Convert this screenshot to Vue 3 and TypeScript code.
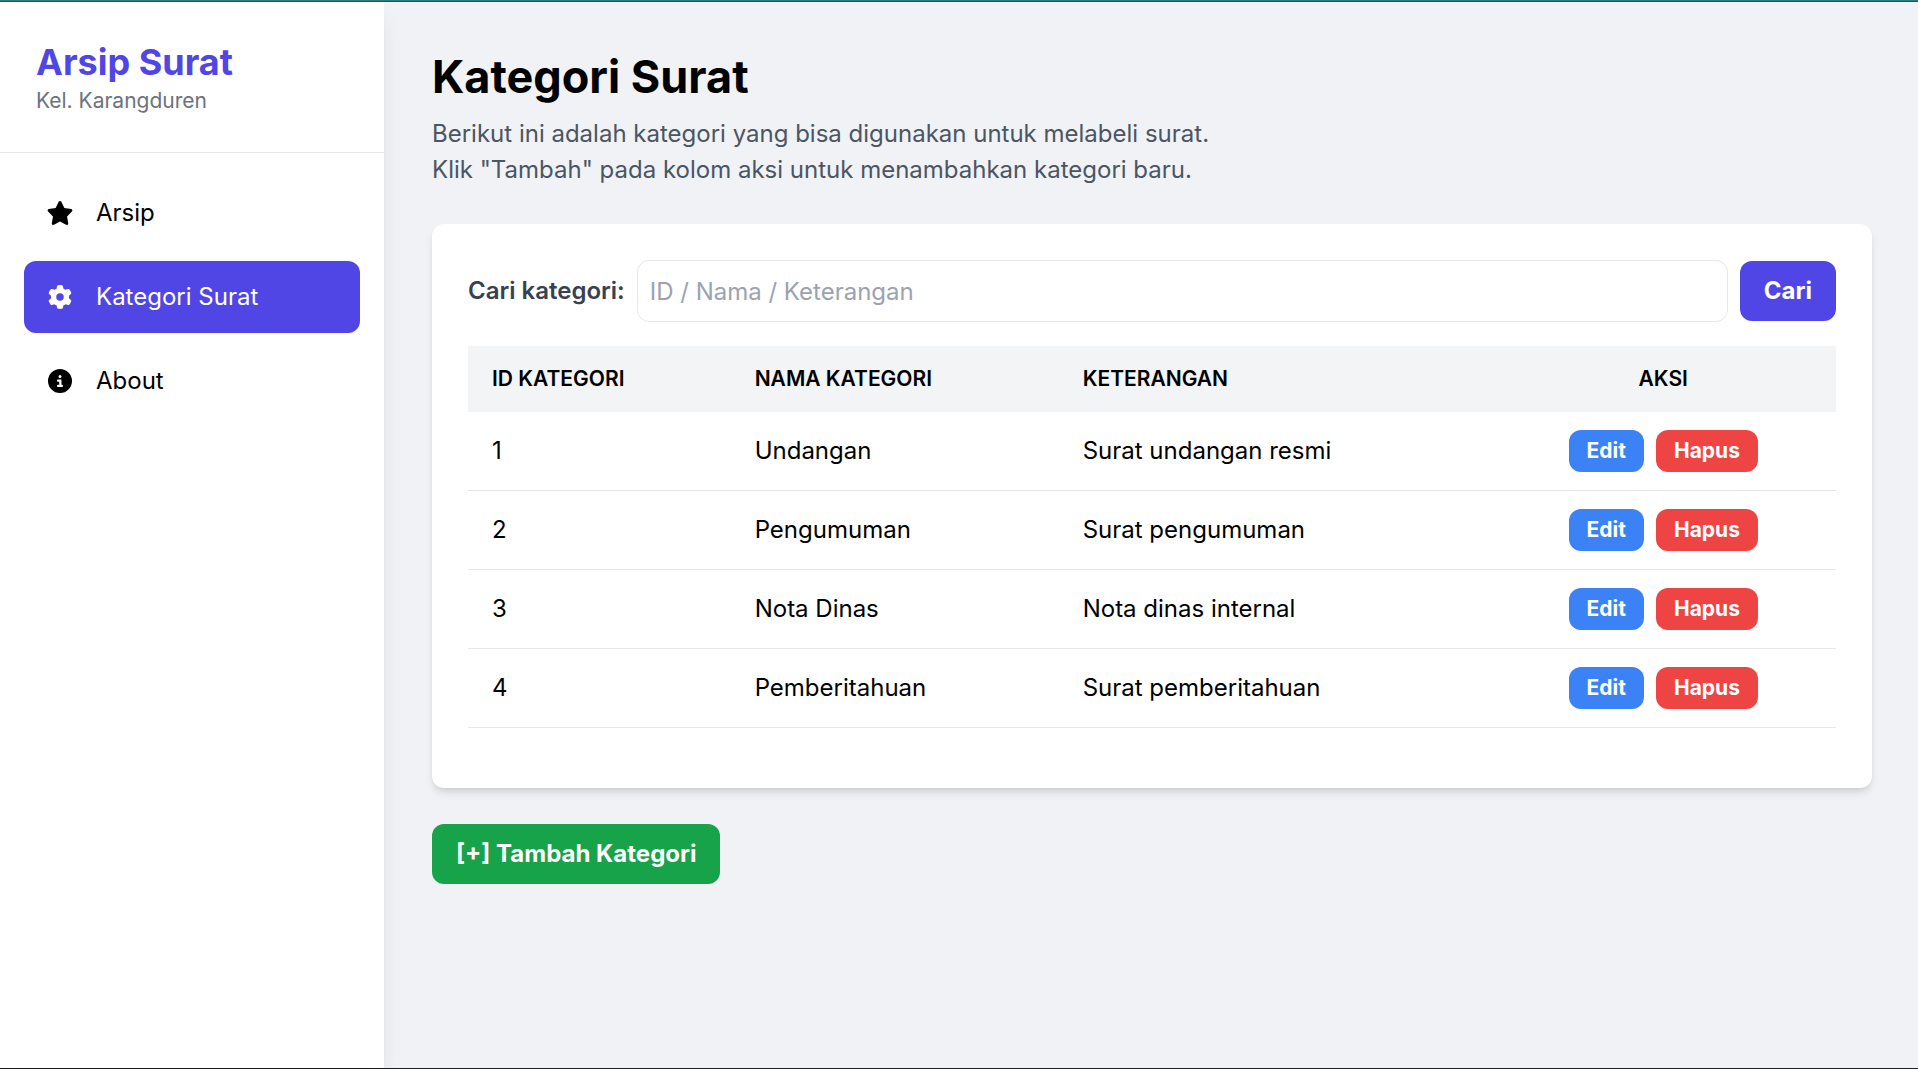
<script setup lang="ts">
import { computed, ref } from 'vue'

interface Kategori {
  id: number
  nama: string
  keterangan: string
}

interface NavItem {
  label: string
  viewBox: string
  path: string
  active: boolean
}

const navItems: NavItem[] = [
  {
    label: 'Arsip',
    viewBox: '0 0 576 512',
    path: 'M316.9 18C311.600 7 300.400 0 288.100 0s-23.400 7-28.800 18L195 150.300 51.400 171.500c-12 1.800-22 10.200-25.700 21.700s-.7 24.200 7.900 32.700L137.800 329 113.200 474.700c-2 12 3 24.200 12.900 31.300s23 8 33.800 2.300l128.300-68.500 128.300 68.500c10.800 5.700 23.900 4.900 33.800-2.300s14.900-19.300 12.900-31.300L438.500 329 542.700 225.900c8.600-8.500 11.700-21.200 7.900-32.700s-13.700-19.900-25.700-21.700L381.200 150.300 316.900 18z',
    active: false,
  },
  {
    label: 'Kategori Surat',
    viewBox: '0 0 512 512',
    path: 'M495.900 166.600c3.200 8.700 .5 18.400-6.400 24.600l-43.300 39.400c1.100 8.300 1.700 16.800 1.700 25.400s-.6 17.100-1.700 25.400l43.300 39.400c6.900 6.200 9.600 15.900 6.400 24.600c-4.400 11.900-9.700 23.300-15.800 34.300l-4.700 8.100c-6.600 11-14 21.400-22.100 31.200c-5.900 7.200-15.700 9.600-24.500 6.800l-55.700-17.700c-13.400 10.300-28.200 18.900-44 25.400l-12.500 57.100c-2 9.100-9 16.300-18.200 17.800c-13.800 2.300-28 3.500-42.500 3.500s-28.700-1.200-42.500-3.500c-9.200-1.500-16.200-8.700-18.200-17.800l-12.500-57.100c-15.800-6.500-30.600-15.100-44-25.400L83.100 425.900c-8.800 2.800-18.600 .3-24.500-6.800c-8.100-9.800-15.500-20.200-22.100-31.200l-4.700-8.100c-6.100-11-11.400-22.400-15.800-34.300c-3.200-8.700-.5-18.400 6.400-24.600l43.300-39.400C64.600 273.100 64 264.600 64 256s.6-17.100 1.700-25.400L22.400 191.200c-6.900-6.200-9.600-15.900-6.400-24.600c4.400-11.900 9.700-23.300 15.800-34.300l4.700-8.100c6.600-11 14-21.400 22.100-31.200c5.900-7.200 15.700-9.600 24.500-6.800l55.700 17.700c13.400-10.300 28.200-18.900 44-25.400l12.500-57.100c2-9.100 9-16.300 18.200-17.800C227.300 1.200 241.500 0 256 0s28.700 1.200 42.500 3.500c9.200 1.500 16.200 8.700 18.200 17.800l12.500 57.100c15.800 6.500 30.600 15.100 44 25.400l55.700-17.700c8.800-2.800 18.600-.3 24.500 6.800c8.100 9.800 15.500 20.200 22.100 31.200l4.700 8.100c6.100 11 11.400 22.400 15.800 34.300zM256 336a80 80 0 1 0 0-160 80 80 0 1 0 0 160z',
    active: true,
  },
  {
    label: 'About',
    viewBox: '0 0 512 512',
    path: 'M256 512A256 256 0 1 0 256 0a256 256 0 1 0 0 512zM216 336h24V272H216c-13.300 0-24-10.700-24-24s10.700-24 24-24h48c13.300 0 24 10.700 24 24v88h8c13.300 0 24 10.700 24 24s-10.700 24-24 24H216c-13.300 0-24-10.700-24-24s10.700-24 24-24zm40-208a32 32 0 1 1 0 64 32 32 0 1 1 0-64z',
    active: false,
  },
]

const daftar = ref<Kategori[]>([
  { id: 1, nama: 'Undangan', keterangan: 'Surat undangan resmi' },
  { id: 2, nama: 'Pengumuman', keterangan: 'Surat pengumuman' },
  { id: 3, nama: 'Nota Dinas', keterangan: 'Nota dinas internal' },
  { id: 4, nama: 'Pemberitahuan', keterangan: 'Surat pemberitahuan' },
])

const input = ref('')
const kataKunci = ref('')

const hasil = computed(() => {
  const kunci = kataKunci.value.trim().toLowerCase()
  return daftar.value.filter((k) =>
    `${k.id} ${k.nama} ${k.keterangan}`.toLowerCase().includes(kunci),
  )
})

function cari() {
  kataKunci.value = input.value
}

function hapus(id: number) {
  daftar.value = daftar.value.filter((k) => k.id !== id)
}
</script>

<template>
  <div class="app">
    <aside class="sidebar">
      <header class="brand">
        <h2 class="brand-name">Arsip Surat</h2>
        <p class="brand-sub">Kel. Karangduren</p>
      </header>
      <nav class="nav">
        <a
          v-for="item in navItems"
          :key="item.label"
          href="#"
          class="nav-link"
          :class="{ active: item.active }"
          :aria-current="item.active ? 'page' : undefined"
        >
          <span class="nav-icon">
            <svg :viewBox="item.viewBox" aria-hidden="true"><path :d="item.path" fill-rule="evenodd" /></svg>
          </span>
          {{ item.label }}
        </a>
      </nav>
    </aside>

    <main class="main">
      <h1 class="title">Kategori Surat</h1>
      <p class="intro">
        Berikut ini adalah kategori yang bisa digunakan untuk melabeli surat.<br />
        Klik "Tambah" pada kolom aksi untuk menambahkan kategori baru.
      </p>

      <section class="card">
        <form class="search" @submit.prevent="cari">
          <label for="cari" class="search-label">Cari kategori:</label>
          <input id="cari" v-model="input" type="text" class="search-input" placeholder="ID / Nama / Keterangan" />
          <button type="submit" class="btn btn-primary">Cari</button>
        </form>

        <table class="table">
          <thead>
            <tr>
              <th scope="col">ID KATEGORI</th>
              <th scope="col">NAMA KATEGORI</th>
              <th scope="col">KETERANGAN</th>
              <th scope="col" class="center">AKSI</th>
            </tr>
          </thead>
          <tbody>
            <tr v-for="k in hasil" :key="k.id">
              <td>{{ k.id }}</td>
              <td>{{ k.nama }}</td>
              <td>{{ k.keterangan }}</td>
              <td>
                <div class="actions">
                  <button type="button" class="btn-small edit">Edit</button>
                  <button type="button" class="btn-small delete" @click="hapus(k.id)">Hapus</button>
                </div>
              </td>
            </tr>
          </tbody>
        </table>
      </section>

      <button type="button" class="btn btn-success">[+] Tambah Kategori</button>
    </main>
  </div>
</template>

<style>
body {
  margin: 0;
  border-top: 1px solid #2f7c7f;
  background: #f0f2f5;
}
</style>

<style scoped>
.app {
  display: flex;
  box-sizing: border-box;
  min-height: calc(100vh - 1px);
  border-top: 1px solid #0f5c5e;
  border-bottom: 1px solid #1f1f23;
  background: #f0f2f5;
  color: #000;
  font-family: Inter, "Liberation Sans", sans-serif;
  font-size: 24px;
  line-height: 36px;
}

h1,
h2,
p {
  margin: 0;
}

button,
input {
  font-family: inherit;
  font-size: inherit;
  line-height: inherit;
}

.sidebar {
  flex: 0 0 384px;
  background: #fff;
  box-shadow: 0 15px 22px -4px rgb(0 0 0 / 0.1), 0 6px 9px -6px rgb(0 0 0 / 0.1);
}

.brand {
  padding: 36px;
  border-bottom: 1px solid #e5e7eb;
}

.brand-name {
  color: #4f46e5;
  font-size: 36px;
  font-weight: 700;
  line-height: 48px;
}

.brand-sub {
  color: #6b7280;
  font-size: 21px;
  line-height: 30px;
}

.nav {
  display: flex;
  flex-direction: column;
  gap: 12px;
  padding: 24px;
}

.nav-link {
  display: flex;
  align-items: center;
  gap: 24px;
  padding: 18px 24px;
  border-radius: 12px;
  color: #000;
  text-decoration: none;
}

.nav-link.active {
  background: #4f46e5;
  color: #fff;
}

.nav-icon {
  display: flex;
  justify-content: center;
  width: 24px;
}

.nav-icon svg {
  flex: none;
  width: 28px;
  height: 24px;
  fill: currentColor;
}

.main {
  flex: 1;
  min-width: 0;
  padding: 48px 46px 48px 48px;
}

.title {
  font-size: 45px;
  font-weight: 700;
  line-height: 54px;
}

.intro {
  margin-top: 12px;
  color: #4b5563;
}

.card {
  margin: 36px 0;
  padding: 36px 36px 60px;
  border-radius: 12px;
  background: #fff;
  box-shadow: 0 6px 9px -1px rgb(0 0 0 / 0.1), 0 3px 6px -3px rgb(0 0 0 / 0.1);
}

.search {
  display: flex;
  align-items: center;
  gap: 12px;
  margin-bottom: 24px;
}

.search-label {
  color: #374151;
  font-weight: 600;
}

.search-input {
  flex: 1;
  min-width: 0;
  box-sizing: border-box;
  height: 62px;
  padding: 12px;
  border: 1px solid #e5e7eb;
  border-radius: 12px;
  background: #fff;
  color: #000;
}

.search-input::placeholder {
  color: #9ca3af;
  opacity: 1;
}

.btn {
  padding: 12px 24px;
  border: 0;
  border-radius: 12px;
  color: #fff;
  font-weight: 700;
  cursor: pointer;
}

.btn-primary {
  background: #4f46e5;
}

.btn-success {
  background: #16a34a;
}

.table {
  width: 100%;
  border-collapse: separate;
  border-spacing: 0;
}

.table th {
  padding: 18px 24px;
  background: #f3f4f6;
  font-size: 21px;
  font-weight: 600;
  line-height: 30px;
  text-align: left;
}

.table th.center {
  text-align: center;
}

.table td {
  padding: 18px 24px;
  border-bottom: 1px solid #e5e7eb;
}

.actions {
  display: flex;
  justify-content: center;
  gap: 12px;
}

.btn-small {
  padding: 6px 18px;
  border: 0;
  border-radius: 12px;
  color: #fff;
  font-size: 21px;
  font-weight: 700;
  line-height: 30px;
  cursor: pointer;
}

.edit {
  background: #3b82f6;
}

.delete {
  background: #ef4444;
}
</style>
